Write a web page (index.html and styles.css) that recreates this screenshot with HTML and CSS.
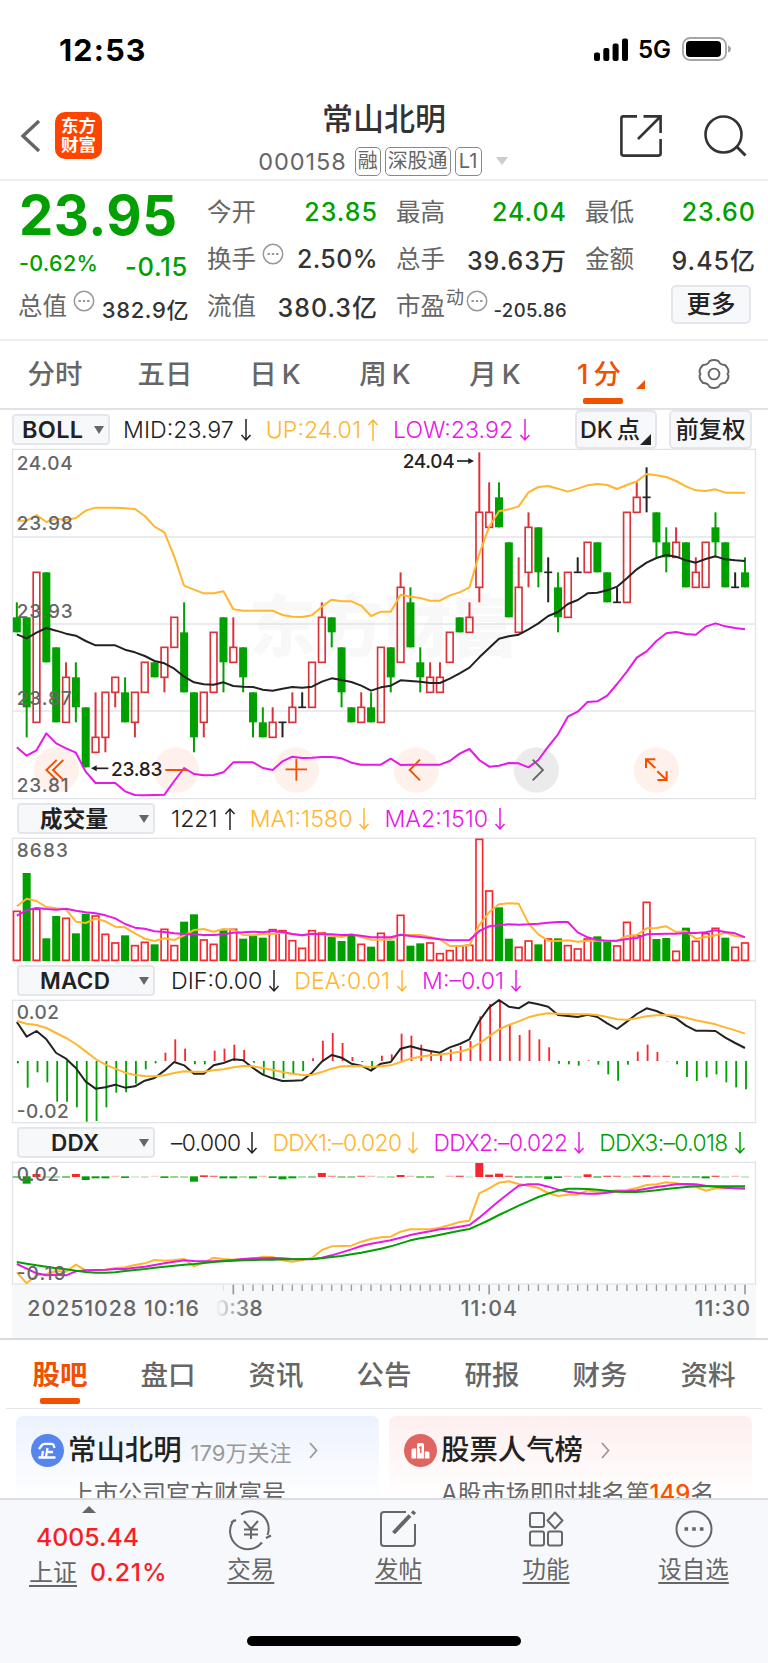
FILE: index.html
```html
<!DOCTYPE html>
<html lang="zh-CN">

<head>
    <meta charset="utf-8">
    <title>常山北明</title>
    <meta name="viewport" content="width=device-width,initial-scale=1">
    <link rel="stylesheet" href="styles.css">
</head>

<body>
    <svg class="defs">
        <symbol id="down" viewBox="0 0 12 24"><path d="M6 1v21M1.5 17L6 22l4.5-5" /></symbol>
        <symbol id="up" viewBox="0 0 12 24"><path d="M6 23V2M1.5 7L6 2l4.5 5" /></symbol>
        <symbol id="more" viewBox="0 0 22 22"><circle cx="11" cy="11" r="9.7" fill="none" stroke="#999" stroke-width="1.5" /><path d="M5.5 11h2.4M9.8 11h2.4M14.1 11h2.4" stroke="#999" stroke-width="2.2" /></symbol>
    </svg>

    <div class="status">
        <span class="clock">12:53</span>
        <svg class="signal" width="34" height="23" viewBox="0 0 34 23">
            <rect x="0" y="14.5" width="6" height="8.5" rx="2" />
            <rect x="9.3" y="10" width="6" height="13" rx="2" />
            <rect x="18.6" y="5.5" width="6" height="17.5" rx="2" />
            <rect x="28" y="0.5" width="6" height="22.5" rx="2" />
        </svg>
        <span class="net">5G</span>
        <svg width="49" height="24" viewBox="0 0 49 24">
            <rect x="1" y="1" width="43" height="22" rx="7" fill="none" stroke="#a5a5a5" stroke-width="1.8" />
            <rect x="4" y="4" width="35" height="16" rx="4" />
            <path d="M46 8.5q3 1 3 3.5t-3 3.5z" fill="#a5a5a5" />
        </svg>
    </div>

    <div class="header">
        <svg class="back" width="20" height="34" viewBox="0 0 20 34"><path d="M18 2L2 17l16 15" fill="none" stroke="#666" stroke-width="3.4" /></svg>
        <div class="logo">东方<br>财富</div>
        <div class="title">
            <div class="name">常山北明</div>
            <div class="code"><span>000158</span><i>融</i><i>深股通</i><i class="lv">L1</i><b></b></div>
        </div>
        <svg class="share" width="42" height="42" viewBox="0 0 42 42"><path d="M17 1.4H3.4q-2 0-2 2V38.600q0 2 2 2H38.600q2 0 2-2V24M23.500 1.400H40.600V18M40 2L18 24" fill="none" stroke="#333" stroke-width="2.6" /></svg>
        <svg width="43" height="42" viewBox="0 0 43 42"><circle cx="19.500" cy="19.500" r="18" fill="none" stroke="#333" stroke-width="2.600" /><path d="M32 31l9.500 9.500" stroke="#333" stroke-width="3" /></svg>
    </div>

    <div class="quote">
        <div class="now">
            <div class="price">23.95</div>
            <div class="change"><span>-0.62%</span><span class="diff">-0.15</span></div>
            <div class="item"><label>总值</label><svg class="tip"><use href="#more" /></svg><em class="mid">382.9亿</em></div>
        </div>
        <div class="col">
            <div class="item"><label>今开</label><em class="green">23.85</em></div>
            <div class="item"><label>换手</label><svg class="tip"><use href="#more" /></svg><em class="rate">2.50%</em></div>
            <div class="item"><label>流值</label><em>380.3亿</em></div>
        </div>
        <div class="col">
            <div class="item"><label>最高</label><em class="green">24.04</em></div>
            <div class="item"><label>总手</label><em>39.63万</em></div>
            <div class="item"><label>市盈</label><sup>动</sup><svg class="tip pe"><use href="#more" /></svg><em class="small">-205.86</em></div>
        </div>
        <div class="col">
            <div class="item"><label>最低</label><em class="green">23.60</em></div>
            <div class="item"><label>金额</label><em>9.45亿</em></div>
            <div class="item"><span class="btn">更多</span></div>
        </div>
    </div>

    <div class="periods">
        <span>分时</span>
        <span>五日</span>
        <span>日<u>K</u></span>
        <span>周<u>K</u></span>
        <span>月<u>K</u></span>
        <span class="on">1<u>分</u><b></b></span>
        <span class="gear"><svg width="32" height="32" viewBox="0 0 32 32" fill="none" stroke="#666" stroke-width="1.900" stroke-linejoin="round"><path d="M11.500 3.200Q16 .8 20.500 3.200Q22.500 7.300 27 7Q30.800 10.500 30.500 14.500Q28.500 16 30.500 17.500Q30.800 21.500 27 25Q22.500 24.700 20.500 28.800Q16 31.200 11.500 28.800Q9.500 24.700 5 25Q1.200 21.500 1.500 17.500Q3.500 16 1.500 14.500Q1.200 10.500 5 7Q9.500 7.300 11.500 3.200z" /><circle cx="16" cy="16" r="5.400" /></svg></span>
    </div>

    <div class="bar boll">
        <span class="select">BOLL<b></b></span>
        <span class="val v1">MID:23.97<svg><use href="#down" /></svg></span>
        <span class="val v2 orange">UP:24.01<svg><use href="#up" /></svg></span>
        <span class="val v3 pink">LOW:23.92<svg><use href="#down" /></svg></span>
        <span class="btn dk">DK<s></s>点</span>
        <span class="btn fq">前复权</span>
    </div>
    <svg class="chart" id="kline" height="350" viewBox="36 147 2232 1050"></svg>

    <div class="bar">
        <span class="select wide">成交量<b></b></span>
        <span class="val">1221<svg><use href="#up" /></svg></span>
        <span class="val orange">MA1:1580<svg><use href="#down" /></svg></span>
        <span class="val pink">MA2:1510<svg><use href="#down" /></svg></span>
    </div>
    <svg class="chart" id="volume" height="123" viewBox="36 129 2232 369"></svg>

    <div class="bar">
        <span class="select wide">MACD<b></b></span>
        <span class="val">DIF:0.00<svg><use href="#down" /></svg></span>
        <span class="val orange">DEA:0.01<svg><use href="#down" /></svg></span>
        <span class="val pink">M:–0.01<svg><use href="#down" /></svg></span>
    </div>
    <svg class="chart" id="macd" height="123" viewBox="36 615 2232 369"></svg>

    <div class="bar ddx">
        <span class="select wide">DDX<b></b></span>
        <span class="val">–0.000<svg><use href="#down" /></svg></span>
        <span class="val orange">DDX1:–0.020<svg><use href="#down" /></svg></span>
        <span class="val pink">DDX2:–0.022<svg><use href="#down" /></svg></span>
        <span class="val green">DDX3:–0.018<svg><use href="#down" /></svg></span>
    </div>
    <svg class="chart" id="ddx" height="122" viewBox="36 126 2232 366"></svg>
    <svg class="chart axis" id="axis" height="54" viewBox="36 492 2232 162"></svg>

    <div class="tabs">
        <span class="on">股吧</span>
        <span>盘口</span>
        <span>资讯</span>
        <span>公告</span>
        <span>研报</span>
        <span>财务</span>
        <span>资料</span>
    </div>

    <div class="cards">
        <div class="card blue">
            <div class="head">
                <svg width="33" height="33" viewBox="0 0 33 33"><circle cx="16.500" cy="16.500" r="16.500" fill="#5685ec" /><path d="M8 15l3-4q1-1.200 2.500-1.200h7q1.500 0 2 1.200l1 3M16.500 14l-1.500 9M17 18h5M12 17l-1 6M7.500 23.500h17" fill="none" stroke="#fff" stroke-width="2.300" /></svg>
                <strong>常山北明</strong><small>179万关注</small>
                <svg class="go" width="9" height="17" viewBox="0 0 9 17"><path d="M1 1l6.500 7.500L1 16" /></svg>
            </div>
            <p>上市公司官方财富号</p>
        </div>
        <div class="card red">
            <div class="head">
                <svg width="33" height="33" viewBox="0 0 33 33"><circle cx="16.500" cy="16.500" r="16.500" fill="#e0645f" /><path d="M7.500 16q0-1.500 1.500-1.500h3.200V24.500H7.500zM13 10.500q0-1.500 1.500-1.500h4q1.500 0 1.500 1.500V24.500H13zM20.800 17.500H24q1.500 0 1.500 1.500v5.500h-4.700z" fill="#fff" /><path d="M15.200 14l1.600-1v6" fill="none" stroke="#e0645f" stroke-width="1.500" /></svg>
                <strong>股票人气榜</strong>
                <svg class="go" width="9" height="17" viewBox="0 0 9 17"><path d="M1 1l6.500 7.500L1 16" /></svg>
            </div>
            <p>A股市场即时排名第<b>149</b>名</p>
        </div>
    </div>

    <div class="footer">
        <div class="menu">
            <div class="index">
                <b></b>
                <div class="point">4005.44</div>
                <div><u>上证</u><span>0.21%</span></div>
            </div>
            <div class="entry">
                <svg width="44" height="38" viewBox="0 0 44 38"><path d="M12 4.500A17.500 17.500 0 0 1 38.500 25M33 32.500A17.500 17.500 0 0 1 5 10M2 12.500l5-2.500M42 25.500l-5 2.500M15 11l7 8 7-8M15 19.500h14M15 24.500h14M22 19v10" /></svg>
                <u>交易</u>
            </div>
            <div class="entry">
                <svg width="38" height="38" viewBox="0 0 38 38"><path d="M27 2H5Q2 2 2 5v28q0 3 3 3h28q3 0 3-3V14" /><path d="M14.500 23L31 5.500M33.500 4l2-2.500" stroke-width="4" /></svg>
                <u>发帖</u>
            </div>
            <div class="entry">
                <svg width="36" height="38" viewBox="0 0 36 38"><rect x="2" y="3" width="14" height="14" rx="2" /><rect x="2" y="21.500" width="14" height="14" rx="2" /><rect x="20" y="21.500" width="14" height="14" rx="2" /><path d="M27 2.500l7.500 8-7.500 8-7.500-8z" stroke-linejoin="round" /></svg>
                <u>功能</u>
            </div>
            <div class="entry">
                <svg width="38" height="38" viewBox="0 0 38 38"><circle cx="19" cy="19" r="17.500" /><path d="M9.500 19h3.600M17.200 19h3.600M24.900 19h3.600" stroke-width="3.600" /></svg>
                <u>设自选</u>
            </div>
        </div>
        <div class="home"></div>
    </div>

    <script src="chart.js"></script>
</body>

</html>
```

FILE: styles.css
```css
html,
body {
    margin: 0;
    padding: 0;
    background: #fff;
}

body {
    width: 768px;
    height: 1663px;
    overflow: hidden;
    font-family: Inter, "Noto Sans CJK SC", sans-serif;
    color: #333;
}

i,
em {
    font-style: normal;
}

.defs {
    display: none;
}

.green {
    color: #00a000 !important;
}

.orange {
    color: #ffb62e !important;
}

.pink {
    color: #e619e6 !important;
}

/* 状态栏 */
.status {
    display: flex;
    align-items: center;
    height: 98px;
    padding: 0 37px 0 59px;
    box-sizing: border-box;
    color: #000;
}

.clock {
    font-size: 30.5px;
    font-weight: 700;
    letter-spacing: 1.2px;
    flex: 1;
}

.net {
    font-size: 24px;
    font-weight: 600;
    margin: 0 11px 0 10px;
}

/* 标题 */
.header {
    display: flex;
    align-items: flex-start;
    height: 83px;
    padding: 17px 21px 0 21px;
    box-sizing: border-box;
    border-bottom: 2px solid #eee;
}

.back {
    margin: 4px 14px 0 0;
}

.logo {
    width: 47px;
    height: 47px;
    margin-top: -3px;
    padding-top: 4px;
    box-sizing: border-box;
    border-radius: 10px;
    background: #ff4400;
    color: #fff;
    font-size: 17.5px;
    line-height: 19px;
    font-weight: 700;
    text-align: center;
}

.title {
    flex: 1;
    margin-top: -19px;
    padding-left: 46px;
    text-align: center;
}

.name {
    font-size: 31px;
    line-height: 46px;
    font-weight: 500;
}

.code {
    display: flex;
    justify-content: center;
    align-items: center;
    height: 30px;
    margin-top: 4px;
    padding-right: 2px;
    color: #666;
    font-size: 23.5px;
}

.code span {
    margin-right: 8px;
    letter-spacing: 0.9px;
}

.code i {
    height: 27px;
    margin-right: 4px;
    padding: 0 2px;
    border: 1.500px solid #888;
    border-radius: 5px;
    font-size: 20px;
    line-height: 26px;
}

.code .lv {
    width: 21px;
}

.code b {
    margin-left: 10px;
    border: 6.500px solid transparent;
    border-top: 8px solid #ccc;
    border-bottom: 0;
}

.share {
    margin-right: 42px;
}

/* 行情 */
.quote {
    display: grid;
    grid-template-columns: 169px 169px 169px 169px;
    column-gap: 20px;
    height: 160px;
    padding: 7px 13px 0 19px;
    box-sizing: border-box;
    border-bottom: 2px solid #eee;
}

.price {
    height: 52px;
    font-size: 54.5px;
    line-height: 54px;
    font-weight: 700;
    letter-spacing: 0.5px;
    color: #00a000;
}

.change {
    display: flex;
    justify-content: space-between;
    align-items: center;
    height: 42px;
    padding-top: 2px;
    margin-bottom: -2px;
    color: #00a000;
    font-size: 21.5px;
    letter-spacing: 0.3px;
    font-weight: 500;
}

.diff {
    font-size: 25.5px;
    letter-spacing: 0.7px;
    padding-top: 6px;
}

.item {
    display: flex;
    align-items: center;
    height: 47px;
    white-space: nowrap;
}

.item label {
    margin: -2px 0 0 -1px;
    font-size: 24.5px;
    color: #666;
}

.item em {
    margin-left: auto;
    margin-right: -1px;
    font-size: 25px;
    font-weight: 500;
    letter-spacing: 1px;
}

.item em.rate {
    letter-spacing: 0.4px;
}

.item em.mid {
    font-size: 22px;
    letter-spacing: 0.6px;
    padding-top: 4px;
}

.item em.small {
    font-size: 18.5px;
    letter-spacing: 0.4px;
    padding-top: 9px;
}

.tip {
    width: 22px;
    height: 22px;
    margin: -10px 0 0 6px;
}

.tip.pe {
    margin-left: 2px;
}

.item sup {
    font-size: 18px;
    color: #666;
    margin: -15px 0 0 1px;
    line-height: 20px;
}

.btn {
    display: inline-block;
    box-sizing: border-box;
    border: 2px solid #e4e6ec;
    border-radius: 5px;
    background: #f7f8fa;
    color: #222;
    text-align: center;
    font-weight: 500;
}

.quote .btn {
    width: 80px;
    height: 39px;
    margin: -2px 4px 0 auto;
    font-size: 24.5px;
    line-height: 34px;
}

/* 周期 */
.periods {
    display: flex;
    height: 69px;
    box-sizing: border-box;
    border-bottom: 2px solid #e1e1e8;
}

.periods span,
.tabs span {
    position: relative;
    width: 110px;
    text-align: center;
    font-size: 27.5px;
    line-height: 67px;
    font-weight: 500;
    color: #666;
}

.periods u {
    margin-left: 5px;
    text-decoration: none;
}

.periods .on,
.tabs .on {
    color: #f05000;
}

.periods .on {
    margin: 0 6px 0 -6px;
}

.on::after {
    content: "";
    position: absolute;
    left: 39px;
    top: 57px;
    width: 40px;
    height: 6px;
    border-radius: 2px;
    background: #f05000;
}

.periods .on b {
    position: absolute;
    left: 92px;
    top: 39px;
    border-left: 9px solid transparent;
    border-bottom: 9px solid #f05000;
}

.periods .gear {
    width: 107px;
}

.gear svg {
    vertical-align: middle;
    margin-top: -5px;
}

/* 指标栏 */
.bar {
    display: flex;
    align-items: center;
    height: 39px;
    padding-left: 17px;
    font-size: 23.2px;
    font-weight: 300;
    color: #222;
    white-space: nowrap;
}

.select {
    display: flex;
    flex-shrink: 0;
    align-items: center;
    box-sizing: border-box;
    width: 98px;
    height: 31px;
    padding-left: 8px;
    border: 2px solid #e4e6ec;
    border-radius: 4px;
    background: #f7f8fa;
    font-weight: 600;
    font-size: 23.5px;
    letter-spacing: 0.3px;
}

.select b {
    margin-left: auto;
    margin-right: 4px;
    border: 5px solid transparent;
    border-top: 8px solid #666;
    border-bottom: 0;
}

.wide {
    width: 138px;
    margin-right: 16px;
    padding-left: 21px;
}

.bar:not(.boll) .select {
    font-size: 22.5px;
    line-height: 27px;
}

.ddx .wide {
    padding-left: 32px;
}

.val {
    margin-right: 14px;
}

.val svg {
    width: 12px;
    height: 24px;
    margin-left: 6px;
    vertical-align: -4px;
    fill: none;
    stroke: currentColor;
    stroke-width: 1.500;
}

.ddx .val {
    font-size: 22.8px;
    letter-spacing: -0.6px;
}

.boll {
    padding-left: 12px;
}

.v1 {
    margin-left: 13px;
}

.boll .btn {
    height: 39px;
    font-size: 23.3px;
    line-height: 35px;
}

.boll .dk {
    position: relative;
    width: 82px;
    margin-left: auto;
    margin-right: 12px;
    padding-right: 12px;
}

.dk s {
    margin-left: 4px;
}

.dk::after {
    content: "";
    position: absolute;
    right: 4px;
    bottom: 2px;
    border-left: 11px solid transparent;
    border-bottom: 11px solid #222;
}

.fq {
    width: 83px;
    margin-right: 16px;
}

/* 图表 */
.chart {
    display: block;
    width: 744px;
    margin-left: 12px;
    overflow: visible;
}

.axis {
    background: #f7f8fa;
}

.chart text {
    font-size: 57px;
    font-weight: 500;
    fill: #666;
}

.chart .mark {
    fill: #222;
}

.chart .water {
    font-size: 200px;
    font-weight: 900;
    fill: #f8f8f8;
}

.chart .time {
    font-size: 64px;
}

/* 栏目 */
.tabs {
    display: flex;
    height: 71px;
    padding: 0 6px;
    box-sizing: border-box;
    border-top: 2px solid #d9dae0;
    background: linear-gradient(#e4e5e9, #e4e5e9) 6px 100% / 756px 1.500px no-repeat;
}

.tabs span {
    width: 108px;
    line-height: 70px;
}

.tabs .on {
    font-weight: 600;
}

.tabs .on::after {
    left: 34px;
    top: 58px;
}

.cards {
    display: flex;
    gap: 10px;
    height: 89px;
    padding: 7px 16px 0;
    box-sizing: border-box;
    overflow: hidden;
}

.card {
    width: 363px;
    height: 110px;
    border-radius: 7px;
}

.blue {
    background: linear-gradient(#ecf2fd, #fff 85px);
}

.red {
    background: linear-gradient(#feefef, #fff 85px);
}

.head {
    display: flex;
    align-items: center;
    height: 69px;
    padding-left: 15px;
}

.head strong {
    margin-left: 4px;
    font-size: 28.4px;
    line-height: 40px;
    margin-top: -2px;
    font-weight: 500;
    color: #222;
}

.head small {
    margin-left: 9px;
    font-size: 22px;
    color: #999;
}

.go {
    margin-left: 18px;
    fill: none;
    stroke: #999;
    stroke-width: 1.800;
}

.card p {
    margin: -8px 0 0 54px;
    font-size: 24px;
    line-height: 34px;
    color: #666;
    white-space: nowrap;
}

.red p {
    margin-left: 52px;
}

.card p b {
    font-weight: 500;
    color: #ff5000;
}

/* 底部 */
.footer {
    height: 165px;
    box-sizing: border-box;
    border-top: 2px solid #dcdde3;
    background: #f7f8fb;
}

.menu {
    display: flex;
    height: 136px;
}

.index {
    width: 177px;
    text-align: center;
    font-size: 24px;
    color: #666;
}

.index b {
    display: block;
    width: 0;
    margin: 6px auto 0;
    border: 7px solid transparent;
    border-top: 0;
    border-bottom: 7px solid #666;
}

.index > div {
    height: 35px;
    line-height: 35px;
    padding-right: 2px;
    margin-left: 20px;
    text-align: left;
    white-space: nowrap;
}

.index .point {
    margin: 7px 0 0 17px;
}

.index .point,
.index span {
    padding-left: 19px;
    font-weight: 500;
    color: #fa1e23;
    font-size: 24.8px;
}

.index span {
    padding-left: 13px;
    letter-spacing: 0.9px;
}

.index u {
    margin-left: 9px;
    text-underline-offset: 4px;
}

.entry {
    display: flex;
    flex-direction: column;
    align-items: center;
    width: 147.600px;
    padding-top: 10px;
    font-size: 23.500px;
    line-height: 43px;
    color: #666;
}

.entry svg {
    fill: none;
    stroke: #666;
    stroke-width: 2;
    overflow: visible;
}

.entry u {
    text-underline-offset: 4px;
}

.home {
    width: 274px;
    height: 10px;
    margin: 0 auto;
    border-radius: 5px;
    background: #000;
}
```

FILE: chart.js
```js
var GREEN = '#00a000', RED = '#d9333a', ORANGE = '#ffb62e', PINK = '#e619e6', BLACK = '#222';

function X(i) {
    return 50.5 + 29.52 * i;
}
function line(ys, color) {
    var p = ys.map(function (y, i) { return X(i).toFixed(1) + ',' + y; }).join(' ');
    return '<polyline points="' + p + '" fill="none" stroke="' + color + '" stroke-width="6" stroke-linejoin="round"/>';
}
function rect(x, y, w, h, fill, extra) {
    return '<rect x="' + x + '" y="' + y + '" width="' + w + '" height="' + h + '" fill="' + fill + '" ' + (extra || '') + '/>';
}
function seg(x1, y1, x2, y2, color, w) {
    return '<path d="M' + x1 + ' ' + y1 + 'L' + x2 + ' ' + y2 + '" stroke="' + color + '" stroke-width="' + w + '" fill="none"/>';
}
function text(x, y, s, len, cls) {
    return '<text x="' + x + '" y="' + y + '" class="' + (cls || '') + '"' + (len ? ' textLength="' + len + '"' : '') + '>' + s + '</text>';
}
function frame(y, h) {
    return rect(37.5, y + 1, 2229, h - 2, 'none', 'stroke="#e3e4ea" stroke-width="4"');
}
function put(id, html) {
    document.getElementById(id).innerHTML = html;
}

// K线：颜色 实体上沿 实体下沿 最高 最低，单位为距 24.04 的分数
var candles = [
    'g 11 12 10 12', 'g 11 17 11 19', 'r 8 18 8 18', 'g 8 14 8 14', 'g 13 18 13 18', 'r 15 18 14 18', 'g 15 17 14 18', 'g 17 21 17 21',
    'r 19 20 16 20', 'r 16 19 16 20', 'r 15 16 15 17', 'g 16 18 15 18', 'r 16 18 16 19', 'r 14 16 14 16', 'g 14 15 14 15', 'r 13 15 13 16',
    'r 11 13 11 13', 'g 12 16 10 16', 'g 16 19 16 20', 'r 16 18 16 19', 'r 12 16 12 16', 'g 11 14 11 16', 'r 13 14 11 14', 'g 13 15 13 16',
    'g 16 18 16 19', 'g 18 19 17 19', 'r 18 19 17 19', 'k 18 18 18 19', 'r 17 18 16 18', 'k 17 17 16 17', 'r 14 17 14 17', 'r 11 14 10 14',
    'g 11 12 11 13', 'g 13 16 13 17', 'g 17 18 17 18', 'r 17 18 16 18', 'g 17 18 16 18', 'r 13 18 13 18', 'g 13 15 13 16', 'r 9 14 8 14',
    'g 10 13 9 13', 'g 14 15 13 16', 'r 15 16 14 16', 'r 15 16 14 16', 'r 12 14 12 14', 'g 11 12 11 12', 'r 11 12 10 12', 'r 4 9 0 10',
    'r 4 5 2 5', 'g 3 5 2 5', 'g 6 11 6 11', 'r 9 12 7 12', 'r 5 8 4 9', 'g 5 8 5 9', 'k 8 8 7 10', 'g 9 11 8 12', 'r 8 11 8 11',
    'k 8 8 7 8', 'r 6 8 6 8', 'g 6 8 6 8', 'g 8 10 8 10', 'k 10 10 9 10', 'r 4 10 4 10', 'r 3 4 2 4', 'k 3 3 1 4', 'g 4 6 4 7',
    'g 6 7 5 8', 'r 6 7 5 7', 'g 6 9 6 9', 'r 8 9 7 9', 'r 6 9 6 9', 'g 5 6 4 7', 'g 6 9 6 9', 'k 9 9 8 9', 'g 8 9 7 9'
];
var up = [362, 362, 345, 366, 356, 360, 354, 332, 323, 323, 323, 325, 327, 348, 380, 397, 470, 557, 569, 580, 580, 574, 628, 632, 632, 632, 632, 645, 650, 651, 646, 620, 599, 604, 604, 617, 648, 635, 635, 584, 590, 594, 602, 602, 586, 577, 562, 462, 380, 334, 328, 319, 277, 261, 258, 266, 275, 266, 256, 252, 255, 267, 255, 244, 222, 226, 231, 243, 259, 271, 273, 268, 278, 278, 278];
var mid = [703, 715, 698, 684, 692, 701, 707, 723, 736, 736, 736, 749, 757, 768, 783, 790, 806, 830, 847, 853, 854, 847, 858, 860, 861, 869, 872, 866, 861, 863, 860, 845, 835, 840, 846, 857, 872, 862, 857, 841, 843, 845, 849, 849, 836, 820, 803, 772, 744, 716, 709, 704, 688, 670, 648, 636, 612, 600, 580, 578, 571, 560, 535, 508, 488, 474, 465, 470, 481, 488, 477, 469, 478, 481, 483];
var low = [1042, 1067, 1051, 1000, 1030, 1045, 1058, 1115, 1149, 1149, 1149, 1174, 1185, 1186, 1185, 1184, 1143, 1104, 1122, 1126, 1125, 1117, 1087, 1087, 1087, 1104, 1110, 1084, 1070, 1074, 1073, 1071, 1071, 1075, 1088, 1094, 1094, 1094, 1076, 1095, 1094, 1094, 1094, 1094, 1083, 1061, 1047, 1080, 1100, 1097, 1089, 1090, 1102, 1080, 1040, 1003, 950, 935, 906, 904, 887, 852, 815, 773, 754, 723, 700, 696, 702, 704, 680, 670, 679, 684, 688];

function drawKline() {
    var s = text(748, 752, '东方财富', 808, 'water') + frame(147, 1050);
    [411, 672, 933].forEach(function (y) { s += seg(37, y, 2266, y, '#e3e5ed', 4); });
    candles.forEach(function (c, i) {
        var a = c.split(' '), x = X(i);
        var y = a.slice(1).map(function (n) { return 157 + 45 * n; });
        var color = a[0] == 'g' ? GREEN : a[0] == 'r' ? RED : BLACK;
        if (a[0] == 'r') {
            s += rect(x - 10, y[0], 20, y[1] - y[0], 'none', 'stroke="' + color + '" stroke-width="5"');
            s += seg(x, y[2], x, y[0], color, 6) + seg(x, y[1], x, y[3], color, 6);
        } else {
            s += seg(x, y[2], x, y[3], color, 6);
            s += a[0] == 'g' ? rect(x - 12, y[0], 24, y[1] - y[0], color) : seg(x - 12, y[0], x + 12, y[0], color, 5);
        }
    });
    // 操作按钮底圆
    [[169, 0], [529, 0], [889, 0], [1249, 0], [1609, 1], [1969, 0]].forEach(function (b) {
        s += '<circle cx="' + b[0] + '" cy="1110" r="68" fill="' + (b[1] ? '#000' : '#f05000') + '" fill-opacity=".08"/>';
    });
    s += line(up, ORANGE) + line(mid, BLACK) + line(low, PINK);
    s += '<g fill="none" stroke="#f05000" stroke-width="5.5"><path d="M170 1080l-31 30 31 30M190 1080l-31 30 31 30M496 1110h66M857 1108h64M889 1076v66M1260 1079l-31 31 31 31"/>' +
        '<path d="M1938 1104v-26h28M1938 1078l28 26M2000 1114v26h-28M2000 1140l-28-26" stroke-width="6"/></g>';
    s += '<path d="M1598 1079l31 31-31 31" fill="none" stroke="#666" stroke-width="5.5"/>';
    s += text(50, 210, '24.04', 168) + text(50, 390, '23.98', 168) + text(50, 653, '23.93', 168) + text(50, 915, '23.87', 165) + text(50, 1176, '23.81', 156);
    s += text(1208, 204, '24.04', 156, 'mark') + seg(1371, 183, 1414, 183, BLACK, 5) + '<path d="M1405 174l17 9-17 9z" fill="#222"/>';
    s += text(333, 1127, '23.83', 154, 'mark') + seg(282, 1105, 325, 1105, BLACK, 5) + '<path d="M290 1096l-17 9 17 9z" fill="#222"/>';
    put('kline', s);
}

// 成交量：负数为下跌
var vol = [347, -234, 341, -430, -363, 368, -415, -356, 361, 416, 442, -421, 450, 440, -448, 401, 450, -380, -358, 433, 446, -406, 401, -431, -423, -428, 402, 405, 435, 458, 405, 412, -425, -438, -423, 446, -455, 413, -437, 359, -452, -445, 442, 474, 465, 451, 449, 131, 286, -337, -431, 455, 436, -448, 430, -430, 450, 460, 430, -424, -438, 451, 380, 420, 320, -432, -429, 467, -398, 437, 414, 398, -428, 455, 442];
var ma1 = [334, 311, 318, 336, 340, 343, 380, 384, 371, 379, 395, 397, 415, 431, 438, 430, 435, 421, 405, 402, 410, 402, 404, 420, 421, 417, 417, 413, 417, 421, 417, 416, 423, 426, 418, 426, 434, 434, 432, 419, 420, 420, 426, 433, 453, 453, 451, 390, 352, 328, 325, 326, 385, 418, 437, 438, 436, 440, 437, 437, 438, 437, 423, 420, 400, 399, 394, 411, 409, 431, 426, 421, 413, 423, 426];
var ma2 = [362, 346, 339, 342, 344, 341, 347, 352, 355, 361, 370, 387, 398, 401, 409, 411, 415, 417, 418, 420, 420, 418, 413, 412, 410, 412, 408, 411, 417, 421, 416, 418, 418, 420, 419, 422, 427, 427, 427, 419, 423, 426, 429, 433, 436, 436, 435, 408, 394, 391, 388, 389, 388, 386, 383, 381, 381, 412, 427, 435, 437, 437, 432, 429, 418, 417, 416, 416, 414, 414, 412, 406, 411, 415, 427];

function drawVolume() {
    var s = frame(129, 370);
    vol.forEach(function (v, i) {
        var x = X(i);
        s += v < 0 ? rect(x - 12, -v, 24, 498 + v, GREEN) : rect(x - 10, v + 2, 20, 494 - v, 'none', 'stroke="#f5282d" stroke-width="5"');
    });
    put('volume', s + line(ma1, ORANGE) + line(ma2, PINK) + text(50, 186, '8683', 154));
}

var hist = [805, 878, 832, 862, 920, 920, 937, 980, 978, 937, 893, 892, 866, 823, 805, 773, 733, 761, 808, 808, 767, 761, 749, 765, 803, 837, 850, 850, 837, 828, 790, 737, 714, 744, 786, 801, 824, 782, 778, 716, 722, 749, 767, 780, 763, 753, 738, 664, 627, 620, 690, 720, 705, 733, 757, 806, 808, 812, 796, 809, 838, 857, 809, 770, 749, 771, 799, 808, 846, 858, 847, 838, 862, 877, 883];
var dif = [681, 725, 708, 733, 774, 791, 819, 860, 881, 877, 869, 878, 874, 857, 849, 827, 801, 811, 836, 836, 811, 804, 793, 796, 819, 839, 850, 858, 857, 856, 833, 800, 780, 788, 806, 812, 827, 806, 801, 761, 754, 762, 768, 773, 757, 747, 733, 678, 637, 615, 635, 640, 622, 628, 635, 660, 663, 666, 659, 666, 685, 702, 680, 657, 640, 648, 661, 670, 692, 707, 707, 708, 728, 744, 759];
var dea = [678, 686, 690, 699, 714, 729, 747, 769, 792, 809, 821, 833, 840, 843, 844, 841, 834, 829, 830, 830, 826, 823, 817, 813, 814, 819, 825, 831, 836, 840, 839, 831, 821, 814, 813, 814, 816, 814, 811, 801, 791, 785, 781, 779, 775, 770, 762, 745, 724, 703, 690, 679, 667, 659, 655, 656, 657, 658, 658, 660, 666, 673, 674, 670, 664, 661, 660, 662, 668, 676, 682, 688, 697, 706, 716];

function drawMacd() {
    var s = frame(615, 369);
    hist.forEach(function (v, i) {
        s += seg(X(i) + 3, 798, X(i) + 3, v, v > 798 ? GREEN : '#f5282d', 5.5);
    });
    put('macd', s + line(dif, BLACK) + line(dea, ORANGE) + text(50, 671, '0.02', 127) + text(50, 969, '-0.02', 156));
}

var flow = [-4, -22, 9, -2, -2, -4, 9, -11, -6, -6, 1, -5, -.5, -1, .3, -5, -3, -2, -16, 5, 3, -6, -6, -2, -6, 1, -5, -9, -6, -2, -3, 12, 2, -3, -3, 3, 1, -1, -2, 6, 1, -4, -4, 0, 1, 4, -.5, 42, 7, 10, 3, -4, -4, -4, -8, -5, 1, -2, 8, -4, 4, 3, -1, 4, 5, 2, 4, -3, -2, -4, -6, 4, -1, 1, -1];
var ddx1 = [457, 490, 466, 462, 453, 455, 434, 451, 451, 450, 444, 442, 435, 430, 420, 422, 420, 417, 439, 428, 413, 417, 419, 418, 418, 410, 411, 421, 425, 420, 414, 390, 379, 378, 377, 365, 357, 352, 350, 335, 328, 328, 328, 323, 315, 306, 302, 220, 205, 188, 184, 192, 197, 204, 219, 228, 224, 224, 211, 216, 214, 211, 210, 204, 195, 193, 187, 190, 194, 201, 212, 205, 205, 203, 203];
var ddx2 = [432, 446, 460, 466, 464, 466, 454, 451, 450, 449, 447, 447, 443, 440, 435, 430, 425, 421, 423, 424, 424, 422, 420, 417, 415, 415, 414, 415, 417, 418, 418, 413, 406, 397, 388, 378, 371, 366, 361, 353, 345, 339, 334, 328, 325, 320, 315, 293, 268, 243, 220, 197, 193, 193, 200, 209, 215, 219, 221, 221, 218, 214, 213, 211, 206, 201, 197, 193, 192, 193, 197, 200, 203, 205, 206];
var ddx3 = [426, 431, 436, 440, 445, 448, 452, 456, 458, 458, 457, 453, 450, 447, 443, 440, 437, 434, 432, 429, 426, 424, 422, 421, 420, 419, 419, 418, 418, 417, 417, 415, 411, 408, 403, 398, 392, 386, 379, 370, 361, 355, 350, 344, 338, 332, 327, 314, 300, 285, 271, 257, 244, 231, 221, 212, 206, 206, 207, 209, 212, 215, 216, 216, 214, 211, 207, 204, 201, 199, 199, 199, 199, 199, 199];

function drawDdx() {
    var s = frame(126, 367);
    flow.forEach(function (v, i) {
        if (!v) return;
        var h = Math.max(4, Math.abs(v));
        var op = Math.min(1, .15 + Math.abs(v) * .16);
        s += rect(X(i) - 12, v > 0 ? 171 - h : 169, 24, h, v > 0 ? '#f5282d' : GREEN, 'fill-opacity="' + op + '"');
    });
    put('ddx', s + line(ddx1, ORANGE) + line(ddx2, PINK) + line(ddx3, GREEN) + text(50, 183, '0.02', 127) + text(50, 480, '-0.19', 147));
}

function drawAxis() {
    var s = '<defs><linearGradient id="fade" x1="0" x2="1"><stop offset="0" stop-color="#666" stop-opacity="0"/><stop offset=".55" stop-color="#666" stop-opacity=".75"/><stop offset=".8" stop-color="#666"/></linearGradient></defs>';
    for (var i = 21; i < 75; i++) {
        var major = (i - 22) % 26 == 0;
        s += seg(X(i), 494, X(i), major ? 523 : 513, i == 21 ? '#e4e4e8' : '#999', major ? 5 : 4);
    }
    s += text(82, 587, '20251028 10:16', 515, 'time');
    s += '<text x="646" y="587" class="time" textLength="142" style="fill:url(#fade)">0:38</text>';
    s += text(1382, 587, '11:04', 169, 'time') + text(2084, 587, '11:30', 166, 'time');
    put('axis', s);
}

drawKline();
drawVolume();
drawMacd();
drawDdx();
drawAxis();
```
